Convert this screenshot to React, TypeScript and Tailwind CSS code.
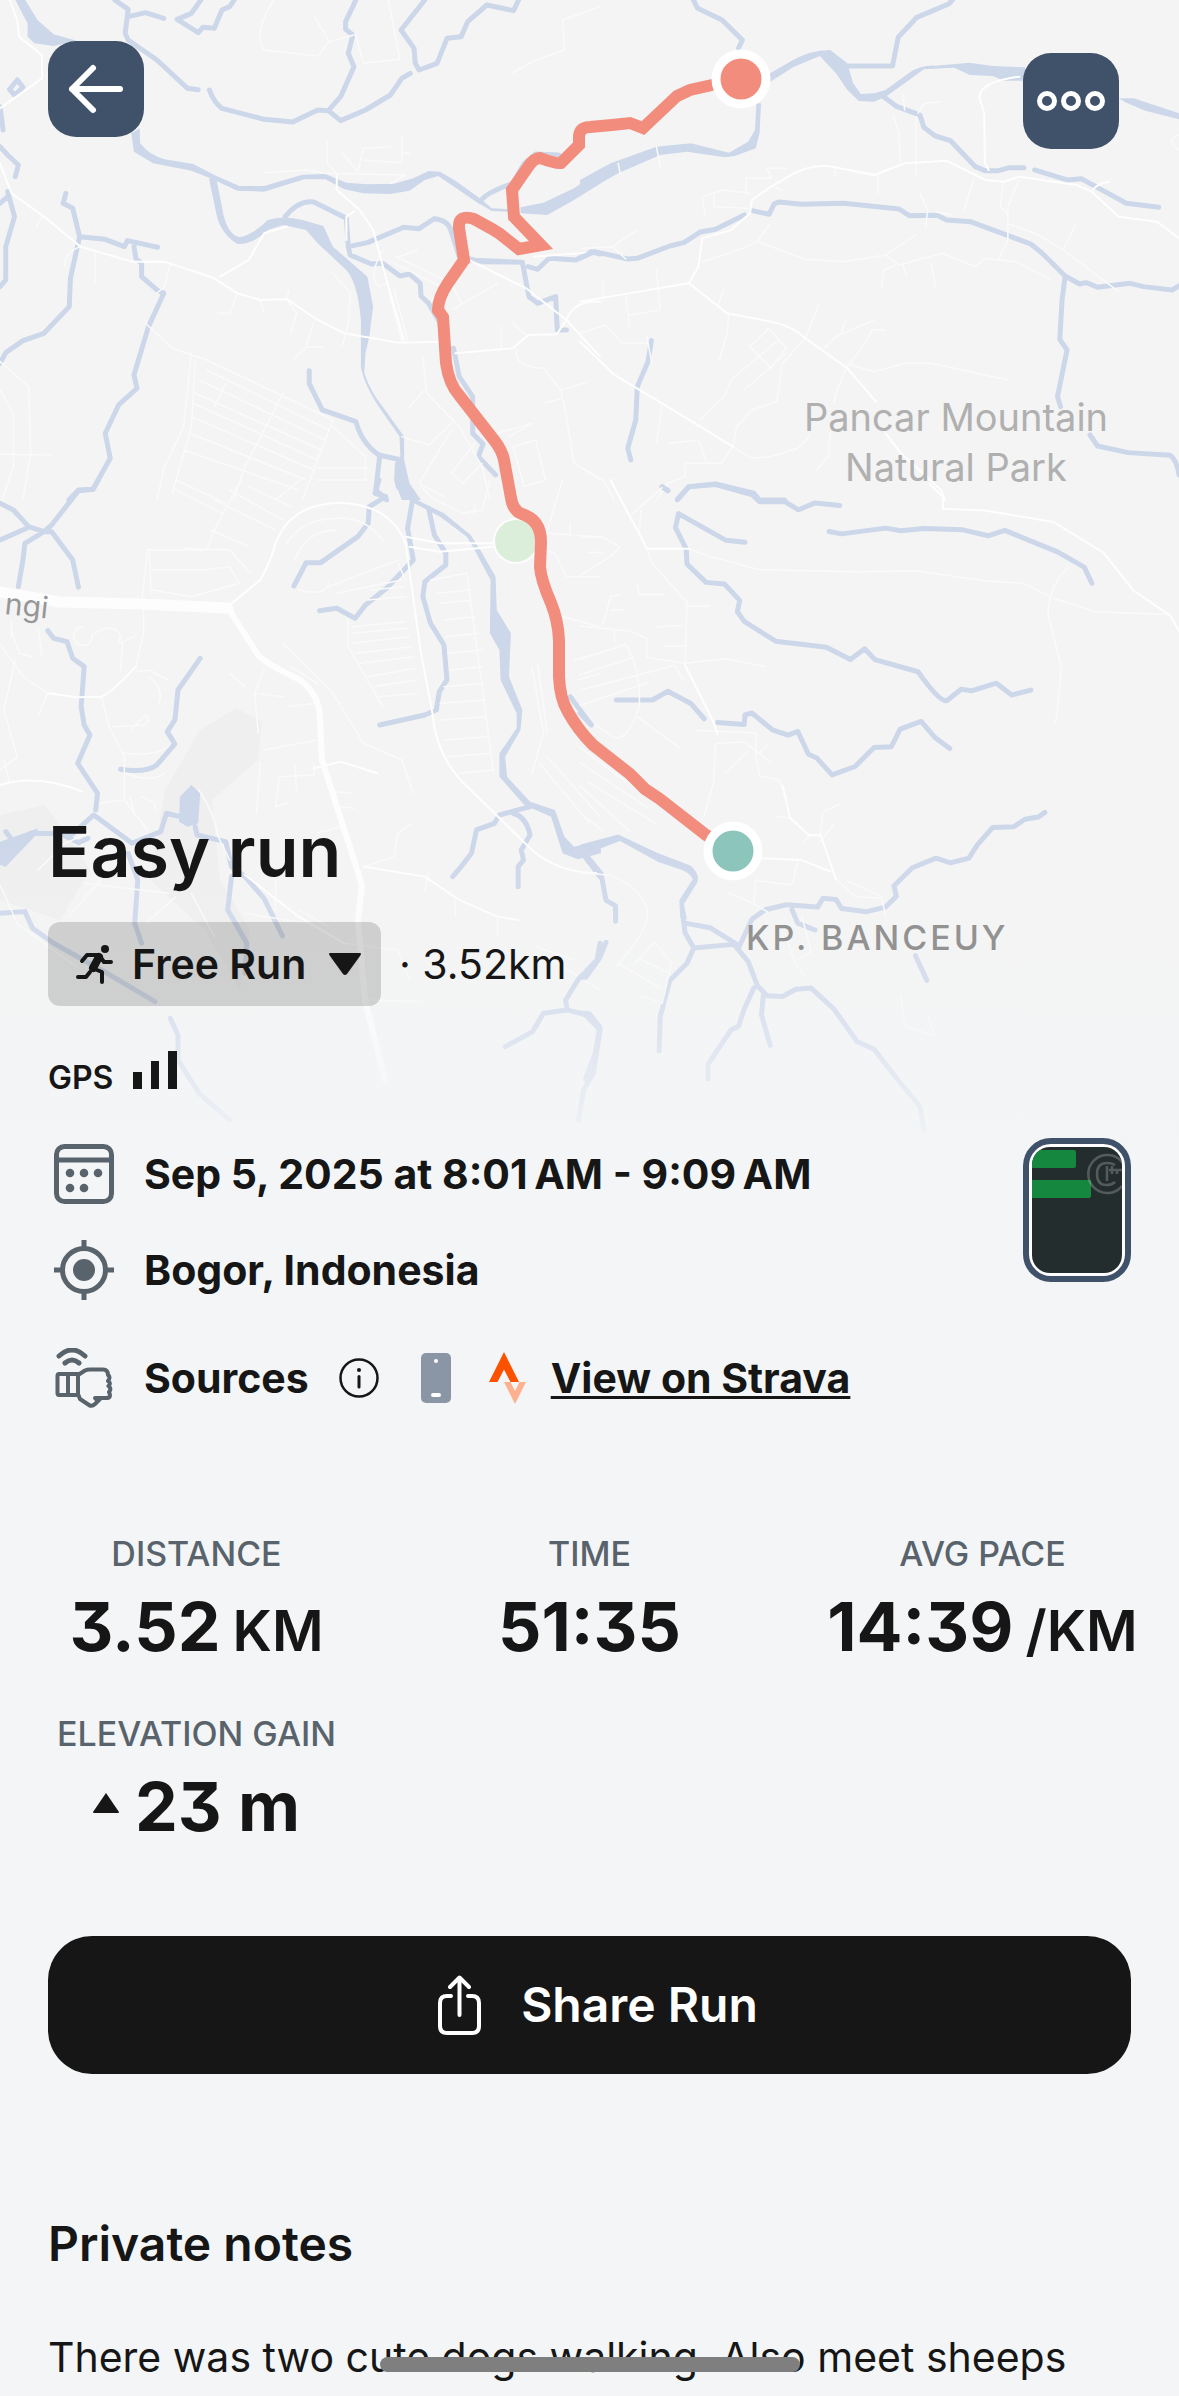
import React, { useState } from "react";

interface MapTile {
    transform: string;
    rivers: string[];
    streams: string[];
    roads: string[];
    lanes: string[];
}

// Each tile keeps its own grid and is placed on the map by its transform
const MAP_TILES: MapTile[] = [
    {
        transform: "scale(0.3827 0.3333)",
        rivers: [
            "M40 0L66 0L98 60L140 103L200 122L140 138L90 130L72 110L72 70Z",
            "M343 400L365 385L366 430Q390 465 430 478L505 492L560 525L625 558L690 558L790 524L850 522L905 548L960 553L1030 551L1080 535L1120 513L1150 515L1190 542L1250 592L1285 625L1340 628L1340 636L1285 633L1240 602L1180 555L1145 528L1110 540L1070 572L1020 582L950 580L900 568L850 538L795 538L690 575L620 572L550 535L500 512L400 490L350 455Z",
            "M1360 622L1420 608L1500 565L1570 510L1570 550L1500 600L1430 645L1360 640Z",
            "M546 535L566 540L580 620Q590 700 625 712Q660 705 700 660Q740 645 790 660L845 678L870 740L960 830L975 920L965 1010L955 1060L952 1120Q970 1180 1000 1220L1056 1310L1056 1380L1070 1450L1100 1500L1050 1500L1030 1440L1032 1390L1046 1370L1044 1310L990 1220Q950 1150 943 1100L943 960Q935 850 905 810L830 730L800 690L740 675L700 690Q660 735 620 732Q575 700 565 640Z",
        ],
        streams: [
            "M300 0L335 28L327 100L335 120L410 180L490 265L518 269",
            "M335 50L380 38L428 55",
            "M525 0L500 40L463 58L518 98L530 82L560 85L580 30L600 20L612 0",
            "M547 270Q560 310 580 325L690 358L765 366L830 330L858 332L890 362L955 330L1020 285L1050 235L1072 220",
            "M930 0L903 65L903 88L922 105L910 160L925 200L890 290L858 332",
            "M1110 0L1048 90L1082 145L1085 190L1095 210L1142 190L1168 115L1205 110L1222 65L1272 15L1342 32L1355 0",
            "M745 650Q780 600 820 606L905 655L910 740L960 728L1055 682L1095 686L1135 656Q1170 660 1178 690L1200 770L1260 785L1365 787",
            "M910 740L915 765L970 792L1000 790L1045 828L1070 822L1098 850L1100 888L1120 910L1150 970",
            "M1255 605Q1265 580 1340 550L1370 490L1400 462L1460 465",
            "M1225 780L1365 787L1382 890L1405 910L1452 890L1456 990L1480 990",
            "M1380 800L1405 808L1435 775L1505 780L1545 755L1568 762",
            "M172 580L165 610L190 625L208 710L275 718L325 740L333 722L412 742",
            "M350 740L355 775L370 790L370 830L410 870L428 880L388 980L350 1125L358 1165L310 1215L275 1300L288 1375L243 1468L205 1470L180 1500",
            "M208 710L184 835L181 920L115 1000L60 1022L15 1058L0 1090",
            "M0 440L20 465L48 495L40 530",
            "M20 575L38 650L15 740L15 840L0 860",
            "M20 590L0 610",
            "M45 240L60 262L38 285L25 268Z",
            "M0 320L8 390",
            "M808 1112L808 1150L842 1230L930 1265Q945 1330 990 1365L1040 1378",
            "M992 1370L982 1470L1010 1500",
            "M1185 1045L1200 1130L1235 1190L1235 1300L1262 1332L1250 1370L1295 1425",
        ],
        roads: [
            "M25 0L45 60L50 110L110 165L110 235L0 325",
            "M0 490L30 580L115 650L210 740L345 785L430 785L560 835L620 880L680 900L750 898L830 960L900 1000L1040 1028L1150 1025",
            "M880 525L880 570L940 630L975 690L1010 840L1055 1020",
            "M905 720L905 650L925 635",
            "M1225 780L1375 865L1480 960L1568 1070",
            "M1395 770L1568 755",
            "M1190 1060L1340 1045L1380 1005L1455 1003L1480 960Q1500 900 1568 905",
            "M575 830L650 780L690 700L750 680",
        ],
        lanes: [
            "M715 0Q660 100 690 150L830 168L860 125L820 45",
            "M860 125L925 105",
            "M690 518L800 510L850 520L1060 525L1020 550",
            "M855 425L855 490L880 520M895 460L935 515L950 445L1020 440M950 480L1050 488L1050 410M1050 460L1070 460",
            "M928 100L950 190L1045 178L1015 0",
            "M1568 20L1470 60L1475 150L1400 180L1340 218",
            "M110 650L95 680M210 740Q165 760 170 800M248 760L250 850M445 790L430 860L410 880",
            "M620 880L600 940L570 940M680 900L690 940M755 870L750 900L775 940L760 1000M820 965L800 1040L845 1042M800 1040L770 1075",
            "M870 820L915 880L910 970L895 1035",
            "M1035 770L1180 850L1205 910M1030 790L1170 870M1045 770L1090 750M1180 930L1300 850M1000 750Q960 830 990 860L1010 850",
            "M1015 870L1050 1025M1030 870L1065 1020",
            "M1350 1050Q1340 1100 1420 1105L1465 1170L1480 1250L1500 1390L1568 1440",
            "M1465 1170L1540 1145M1425 1210L1465 1195M1340 970L1380 1010M1310 980L1310 1040",
            "M380 970L450 1045L540 1080L870 1260L790 1500",
            "M500 1060L480 1280L430 1400L410 1500M510 1080L500 1280L450 1480",
            "M540 1110L860 1290M520 1140L850 1320M510 1180L840 1350M505 1210L830 1380M500 1250L820 1410M495 1300L800 1440M480 1350L780 1470",
            "M740 1180L640 1400L610 1500M590 1150L560 1220M870 1280L955 1370L955 1440M830 1405L960 1405M830 1440L960 1440",
            "M0 1170L35 1240L35 1400L5 1500M0 1085L75 1160L80 1360L60 1500M0 1362L135 1365",
            "M1105 1070L1115 1180L1200 1280L1260 1400L1280 1500M1070 1220L1110 1170M1050 1310L1120 1335L1180 1270",
            "M1180 1290L1095 1450L1160 1490M1240 1330L1180 1420L1210 1450L1260 1390M1330 1310L1390 1270L1300 1300M1340 1340L1400 1320L1425 1440L1370 1460Z",
        ],
    },
    {
        transform: "translate(580 0) scale(0.382 0.3333)",
        rivers: [
            "M0 540L80 490L200 440L290 430L390 458L440 425L458 390L462 310L474 310L470 400L460 445L405 468L380 472L280 455L210 465L100 520L0 585Z",
            "M490 225L550 185Q600 150 655 150L700 190L715 250L735 282L770 280L800 270L860 220Q890 195 930 197L1020 188L1080 198L1165 202L1165 242L1110 242L1080 228L1020 225L980 203L900 208L850 250L800 290L770 305L730 303L700 270L670 220L628 168L560 200L498 245Z",
            "M1410 295L1450 295L1568 340L1568 358L1480 332L1430 308Z",
        ],
        streams: [
            "M297 0L308 25L372 60L425 120L415 145",
            "M975 0L965 12L882 52L833 112L818 198L705 198",
            "M795 290L830 320L890 345L900 382L930 408L970 422L1035 500L1060 512L1095 512L1125 503L1162 503",
            "M1190 510L1275 540L1312 536L1430 610L1515 622",
            "M0 775L38 755L125 777L150 775L235 738L272 728L315 696L355 688L430 645",
            "M450 632L495 643L508 612L520 606L580 613L690 610L835 627L862 647L935 646L960 660L1022 665L1180 732L1210 760L1270 828L1308 852L1325 848L1355 862L1440 850L1475 860L1550 870L1568 858",
            "M1270 828L1262 900L1256 1018L1275 1050L1250 1190L1258 1220",
            "M1335 1305L1355 1338L1435 1358L1545 1366Q1562 1380 1568 1425",
            "M187 1022L178 1085L150 1160L146 1260L125 1345L133 1380",
            "M255 1500L285 1460L355 1452L455 1480L470 1500L535 1500",
            "M215 1460L230 1472",
        ],
        roads: [
            "M1150 230Q1050 245 1045 290L1058 340L1060 490L1070 510",
            "M500 560L560 520Q620 485 680 505L770 525L850 490L960 482L1060 540L1110 545L1150 530L1300 555L1340 575L1410 650L1510 665L1568 715",
            "M500 560L450 600L445 640L395 690L320 715L310 800L285 850",
            "M0 905L285 850L330 890L385 940L500 965Q560 980 590 1015L700 1105L775 1205",
            "M800 1300L840 1360L945 1470L955 1500",
            "M0 1025L90 1125L215 1210L400 1340",
            "M1340 575Q1350 550 1385 545",
        ],
        lanes: [
            "M820 345L835 400L838 490M880 350L880 530M845 280L850 330M885 340L900 310L945 305",
            "M320 785Q400 760 465 725L495 675M465 725L590 778L690 785L800 765L880 705M800 765L835 795L950 760L1035 800L1060 775L1140 785L1230 838",
            "M845 795L855 830M920 790L930 860M790 860L795 810L825 795M1095 780L1120 720L1120 620L1148 540M1120 670L1200 705L1265 750L1410 875M1265 750L1297 675",
            "M890 580L910 630L905 680M930 635L975 645M1030 540L1005 630M1108 545L1100 620L1120 640M780 520L780 580M668 505L668 530",
            "M320 590L375 570L445 580M320 590L328 650M350 585L350 620L440 625M435 580L435 535L500 535L490 505L540 505M500 560L530 570",
            "M0 745L85 740L150 690M85 740L120 777M100 490L105 520M200 440L210 500",
            "M0 1000L65 975L110 1028L175 1030M175 1010L188 1090M120 890L130 980M200 810L210 930L130 945M60 840L60 890",
            "M590 1015L625 915M590 1015L530 1090L515 1205L450 1230L410 1280L400 1340L450 1375L500 1370L570 1345L600 1310",
            "M495 985L540 1045L500 1105L445 1040ZM520 1020L395 1140L380 1185L315 1260M540 1060L430 1170",
            "M640 1045L670 1010L770 960M695 965L680 1010M700 1100L740 1040L765 990L800 990M710 1095L770 1115L850 1090L920 1090L1120 1140",
            "M695 1110L670 1180L665 1210M655 1300L650 1370L620 1410M375 870L360 920M390 940L385 1000L365 1080",
            "M215 1210L200 1330M235 1330L310 1320L330 1380M275 1390L370 1390L400 1340M275 1390L275 1430L230 1450L200 1500M0 1400L60 1440L90 1500",
            "M1568 405Q1530 420 1568 450",
        ],
    },
    {
        transform: "translate(0 480) scale(0.3827 0.3333)",
        rivers: [
            "M1030 0L1065 0L1090 60L1160 100L1230 165L1260 220L1295 290L1298 390L1335 460L1330 590L1365 690L1360 750L1320 830L1325 890L1385 965L1450 990L1475 1070L1500 1100L1570 1080L1570 1120L1510 1138L1470 1120L1440 1010L1370 975L1305 890L1305 820L1350 745L1350 700L1308 600L1305 510L1280 460L1282 300L1240 210L1220 170L1150 110L1075 65L1035 25Z",
            "M470 950L500 915L523 940L518 1030L490 1040L468 1025Z",
            "M0 1085L50 1065L100 1045L90 1070L40 1130L15 1160L0 1155Z",
        ],
        streams: [
            "M257 0L243 28L205 32L135 135L115 155L65 190L60 240L48 320",
            "M0 70L35 90L75 140L115 155L135 155L190 240L205 322",
            "M0 180L70 145",
            "M125 452L140 475L175 485L190 535L220 560L212 680L220 735L235 765L203 850L255 940L250 990",
            "M523 535L465 630L457 720L437 755L457 792L410 855Q380 880 315 868",
            "M990 0L980 40L1008 50L965 80L962 130L935 170L838 248L800 248L768 318",
            "M1078 60L1065 145L1080 240L1010 325L955 375L928 415L880 385L835 392",
            "M1120 85L1135 165L1165 220L1165 255L1110 305L1105 350L1125 430L1160 495L1168 600L1148 635L1140 690L1110 705L992 735",
            "M1490 650L1545 735",
            "M1385 980L1305 1005L1292 1030L1245 1050L1232 1120L1205 1160L1183 1190",
            "M1340 1000Q1375 1010 1385 1065L1362 1110L1368 1140L1354 1160L1354 1220",
            "M15 1055L35 1085M80 1060L190 1062L245 1005L345 1090L420 1055L435 1000L470 1010",
            "M170 1068L205 1088L230 1075",
            "M510 1040L515 1065L590 1085L605 1160L640 1190L690 1255L738 1368",
            "M335 1120L360 1200L352 1330L370 1390",
            "M605 1190L595 1290L645 1390L640 1480",
            "M0 1300L65 1295L85 1345L140 1390L280 1480L405 1565",
            "M445 1615L465 1665L465 1740L520 1840L600 1920",
            "M1525 1125L1568 1190",
            "M1568 1390L1560 1440L1510 1500L1478 1560L1482 1590L1420 1600L1392 1655L1320 1700",
            "M1482 1590L1530 1605L1568 1650L1550 1780L1525 1830L1512 1920",
        ],
        roads: [
            "M600 375L680 300Q710 240 720 190Q760 70 890 68Q1020 75 1060 190L1100 520L1130 700Q1140 840 1230 930L1390 1110Q1460 1180 1568 1180",
            "M1060 170L1150 190L1290 190M1070 200L1150 215L1290 200",
            "M640 1185L780 1310L900 1390",
            "M820 865L890 845L985 880",
            "M950 1160L1110 1190L1200 1260L1300 1310L1355 1320",
            "M125 640L200 652L265 650Q290 640 355 560",
            "M0 915Q100 880 215 935",
        ],
        lanes: [
            "M265 650L285 740L325 830L325 960L385 1050M355 560L375 460L375 370M355 575L390 570L440 600M390 590Q430 630 415 670",
            "M0 490L60 590L125 640L100 705M40 540L10 690L45 830L0 870M10 840L25 910",
            "M215 440Q180 450 200 490Q240 510 240 465Q300 420 315 470L310 490L350 470M320 490L315 570",
            "M370 370L385 210L540 210L560 150L630 0M390 220L395 340M400 270L530 270L600 260L625 310L500 350L400 330M480 205L600 210L655 280",
            "M460 0L590 70M460 30L580 100M560 60L720 150M600 30L740 120M650 20L760 80M720 60L785 0M550 150L650 200",
            "M750 190Q790 110 900 115Q960 120 1000 180M770 240Q800 150 880 150M780 330Q850 350 860 310M860 320L1040 240M880 340L1050 300",
            "M910 420L910 500L1000 680M920 440L1060 425M920 460L1065 445M920 490L1070 470M930 520L1075 500M940 550L1080 530M960 590L1085 565M975 620L1090 600M990 650L1090 640",
            "M1125 300L1220 280L1290 880M1140 340L1230 330M1150 370L1235 360M1160 420L1240 410M1165 470L1250 460M1170 520L1260 510M1175 570L1262 560M1160 620L1265 610M1150 670L1270 660M1150 720L1270 710M1160 780L1275 770M1170 830L1280 820M1200 880L1285 870",
            "M960 360L1060 350M970 330L1055 320M1040 250L1060 300",
            "M740 490L870 640L950 790L1050 840L1080 940M760 560L830 610M690 810L830 780M750 680L825 670",
            "M720 980L730 890L820 885L820 850M770 850L775 930M720 980L750 970M870 935L920 940M890 980L925 985M830 1060L890 1040",
            "M670 1000L680 850M690 570L665 640L675 760M665 640L740 650M600 580L640 620",
            "M340 750L380 705Q400 720 375 735L295 740M325 820Q400 830 440 800",
            "M260 970L320 960M340 950L350 1000L380 1040M370 950L405 970L405 990M430 880Q390 910 330 880",
            "M1075 1030L1040 1060L1030 1130L950 1160M1120 1180L1110 1230M1190 1260L1190 1310M1300 1310L1300 1370",
            "M1390 880L1420 760L1390 560M1405 550L1430 760M1500 540L1568 520M1510 600L1568 580M1430 830L1568 1010M1410 850L1540 1030",
            "M1430 160L1568 170M1420 210L1450 220L1480 290L1568 290M1470 0L1430 150M1490 130L1490 170M1470 410L1568 440",
            "M0 1215L45 1330L150 1420L200 1460M220 1210L440 1240M270 1190L180 1310M460 1250L380 1330M500 1240L560 1370",
            "M520 930Q560 1000 570 1070L600 1140M100 1170L170 1090L230 1060",
            "M30 450L50 520L85 530M100 450L110 530M30 420L30 470",
            "M900 1390L1040 1410L1070 1500M960 1560L1100 1565M1440 1440L1568 1530M1400 1400L1500 1440",
            "M1100 20L1130 55L1210 100L1260 90L1280 0M1240 70L1240 100",
            "M640 1300L800 1330M720 1290L720 1200M780 1290L860 1340",
        ],
    },
    {
        transform: "translate(580 480) scale(0.382)",
        rivers: [
            "M0 955L100 928L200 975L290 1010Q322 1040 300 1065L272 1110L280 1150L262 1145L260 1100L295 1045Q290 1028 260 1018L205 1000L105 945L0 985Z",
        ],
        streams: [
            "M215 18L230 28",
            "M255 50L285 18L355 12L450 38L470 57L535 56L572 78L615 60L680 67",
            "M432 163L382 158L258 88L250 125L278 180L280 220L330 268L378 272L418 315L412 345L430 370L512 422L645 438L708 470L745 442L772 470L885 502Q940 580 960 578L998 548L1025 552L1090 532L1130 563L1180 550",
            "M652 135L685 141L800 126L840 133L900 127L1000 130L1068 146L1112 132L1250 188L1320 228L1340 270",
            "M95 576L190 576L230 553L290 585L325 625",
            "M360 635L430 640L432 615L450 610L505 655L545 668L570 658L598 718L620 728L660 772L720 750L770 700L815 698L838 652L893 632L930 675L968 703",
            "M1217 870L1200 882L1165 888L1135 908L1080 910L1040 955L1018 990L970 1002L932 990L870 1015L822 1062L828 1090L800 1118L750 1130L685 1122L670 1098L636 1095L622 1118L540 1112L485 1125L450 1150L415 1225",
            "M555 1125L570 1160L615 1178",
            "M270 1145L275 1185L298 1225L410 1215L340 1172L275 1160",
            "M400 1212L440 1260L465 1325L490 1350L530 1352L565 1333L605 1330L665 1385L725 1470L770 1490L830 1568",
            "M298 1225L280 1265L235 1310L210 1405L207 1495",
            "M455 1330L430 1385L415 1430L395 1440L335 1530L335 1568",
            "M480 1350L475 1400L498 1480",
            "M10 975L55 1030L68 1100L93 1115L93 1155",
            "M68 1210L52 1250L15 1302L0 1302",
            "M0 1395L25 1398L52 1432L40 1500L15 1568",
            "M830 1568L890 1640L900 1700",
            "M878 1245L908 1310",
            "M0 610L28 640",
        ],
        roads: [
            "M915 10L950 45L950 75L1060 80L1240 110L1370 190L1450 290L1545 355L1568 395",
            "M80 0L130 95L155 140L175 180L285 180",
            "M275 485L350 635L360 665",
            "M475 990L580 995L655 1025",
            "M530 800L550 885L600 930L630 930L670 1045",
        ],
        lanes: [
            "M285 180L340 200L470 235L720 240L880 238L1070 265L1160 270L1240 310L1350 345L1540 352",
            "M1280 228Q1230 270 1225 350L1260 490L1250 600L1245 635",
            "M175 180L190 220L280 320L275 485M275 330L340 330M200 385L270 380M225 435L275 435M150 270L155 300L220 300",
            "M275 480L380 468L485 488M0 382L130 395L175 415L175 465L280 480M90 395L90 425M60 380L80 305L105 300M80 340L115 340",
            "M0 150L60 150L105 175L80 200L0 250M130 95L215 20M160 80L155 140M20 190L60 190",
            "M0 470L120 430Q160 500 155 590Q130 680 90 675L40 640M0 510L140 465M0 550L250 485L270 525M0 590L180 530M150 620L260 700",
            "M305 655L460 662L460 720L470 775L520 785L540 830M355 690L430 685L500 740M440 710L380 768M355 690L350 790L325 880M495 690L470 715",
            "M515 880L550 885M630 930L635 870L680 848M665 900L630 945M585 950L600 930",
            "M388 1080L460 1112L490 1130M455 1110L460 1048L555 1060L570 1000",
            "M0 1028L80 1035Q170 1070 178 1140Q170 1190 90 1280M100 1265L210 1330M140 1270L195 1210L240 1265L215 1370M150 1250L230 1290M160 1350L215 1370",
            "M670 1045L720 1090L790 1095L800 1140M700 1050L790 1090M545 1210L560 1260L605 1235L580 1140M560 1260L590 1300",
            "M0 700L120 790M0 740L180 860M20 790L200 900M0 800L130 920M0 870L60 920M130 790L320 905",
            "M840 1350L850 1430L930 1455L910 1400",
        ],
    },
];

const ROUTE =
    "M740 79L712 85L690 90L677 96L660 112L643 128L630 123L612 125L590 127Q580 127 579 136L579 145L561 163Q556 164 540 158Q534 158 528 167L512 190L514 217L541 245L519 249L500 234L492 229L474 219Q458 214 459 228L464 260L448 283Q438 298 438 310L443 317L446 363Q449 384 459 395L494 440Q502 450 504 460L511 498Q513 511 522 514Q541 520 541 542L540 567Q541 580 551 603Q558 620 559 640L559 677Q560 699 568 712Q578 730 593 745L630 774L645 789L660 799L706 835L733 851";

const RunMap: React.FC = () => (
    <svg
        viewBox="0 0 1179 1200"
        className="absolute inset-x-0 top-0 h-auto w-full"
        fill="none"
        strokeLinecap="round"
        strokeLinejoin="round"
        aria-label="Run route map"
    >
        <defs>
            <linearGradient id="mapFade" x1="0" y1="0" x2="0" y2="1">
                <stop offset="0" stopColor="#f3f5f7" stopOpacity="0" />
                <stop offset="0.4" stopColor="#f3f5f7" stopOpacity="0.25" />
                <stop offset="0.9" stopColor="#f3f5f7" />
            </linearGradient>
        </defs>
        <rect width="1179" height="1200" fill="#f4f4f4" />

        {/* Built-up areas */}
        <path
            d="M236 708L262 722L258 760L212 800L220 880L250 930L240 990L205 930L150 880L165 790L200 730Z"
            fill="#efefef"
        />
        <path d="M0 815L45 805L70 840L90 870L60 920L0 900Z" fill="#efefef" />

        {MAP_TILES.map((tile) => (
            <g key={tile.transform} transform={tile.transform}>
                <path d={tile.rivers.join("")} fill="#cdd7ea" />
                <path
                    d={tile.streams.join("")}
                    stroke="#cdd7ea"
                    strokeWidth="5"
                    vectorEffect="non-scaling-stroke"
                />
                <path
                    d={tile.lanes.join("")}
                    stroke="#fafafa"
                    strokeWidth="1.5"
                    vectorEffect="non-scaling-stroke"
                />
                <path
                    d={tile.roads.join("")}
                    stroke="#fefefe"
                    strokeWidth="2"
                    vectorEffect="non-scaling-stroke"
                />
            </g>
        ))}

        {/* Main road */}
        <path d="M0 592L60 602L140 604L228 608" stroke="#fdfdfd" strokeWidth="11" />
        <path
            d="M228 608L258 655Q265 663 300 680Q320 695 320 720L322 760L362 885L358 920L365 1000L385 1080"
            stroke="#fdfdfd"
            strokeWidth="6"
        />

        <circle cx="516" cy="541" r="22" fill="#dbeeda" stroke="#fdfdfd" strokeWidth="2" />

        <rect y="840" width="1179" height="360" fill="url(#mapFade)" />

        <g fontFamily="Inter, sans-serif">
            <g fontSize="38" fill="#b0b0b0" textAnchor="middle">
                <text x="956" y="431">Pancar Mountain</text>
                <text x="956" y="481">Natural Park</text>
            </g>
            <text x="746" y="950" fontSize="34" fontWeight="500" letterSpacing="3" fill="#929292">
                KP. BANCEUY
            </text>
            <text x="4" y="614" fontSize="30" fill="#969696" transform="rotate(6 4 614)">
                ngi
            </text>
        </g>

        <path d={ROUTE} stroke="#f28d7e" strokeWidth="12" strokeLinejoin="miter" />
        <circle cx="741" cy="79" r="25" fill="#f28d7e" stroke="#fff" strokeWidth="9" />
        <circle cx="733" cy="851" r="25" fill="#8bc5bb" stroke="#fff" strokeWidth="9" />
    </svg>
);

const BackIcon = () => (
    <svg viewBox="0 0 96 96" className="size-24" fill="none" stroke="#fff" strokeWidth="6" strokeLinecap="round" strokeLinejoin="round">
        <path d="M72 48H24M45 27L24 48L45 69" />
    </svg>
);

const MoreIcon = () => (
    <svg viewBox="0 0 96 96" className="size-24" fill="none" stroke="#fff" strokeWidth="5">
        <circle cx="24" cy="48" r="7.500" />
        <circle cx="48" cy="48" r="7.500" />
        <circle cx="72" cy="48" r="7.500" />
    </svg>
);

const RunnerIcon = () => (
    <svg viewBox="0 0 38 42" className="h-[42px] w-[38px]" fill="none" stroke="#161616" strokeWidth="4" strokeLinecap="round" strokeLinejoin="round">
        <circle cx="29" cy="6" r="4" fill="#161616" stroke="none" />
        <path d="M23 14L17 25" strokeWidth="8" />
        <path d="M6 18L11 12H23L28 19H35" />
        <path d="M16 25L26 29V39M14 29L10 34H2" />
    </svg>
);

const CalendarIcon = () => (
    <svg viewBox="0 0 60 60" className="size-[60px] shrink-0" fill="none" stroke="#59636c" strokeWidth="5">
        <rect x="2.5" y="2.5" width="55" height="55" rx="8" />
        <path d="M2.5 16H57.5" />
        <g fill="#59636c" stroke="none">
            <circle cx="16" cy="29" r="4.3" />
            <circle cx="30" cy="29" r="4.3" />
            <circle cx="44" cy="29" r="4.3" />
            <circle cx="16" cy="44" r="4.3" />
            <circle cx="30" cy="44" r="4.3" />
        </g>
    </svg>
);

const LocationIcon = () => (
    <svg viewBox="0 0 60 60" className="size-[60px] shrink-0" fill="none" stroke="#59636c" strokeWidth="5">
        <circle cx="30" cy="30" r="21.5" />
        <path d="M30 0V8M30 52V60M0 30H8M52 30H60" />
        <circle cx="30" cy="30" r="11" fill="#59636c" stroke="none" />
    </svg>
);

const WearableIcon = () => (
    <svg viewBox="0 0 60 60" className="size-[60px] shrink-0" fill="none" stroke="#59636c" strokeWidth="4" strokeLinecap="round" strokeLinejoin="round">
        <path d="M5 8Q18 -4 31 8M11 15Q18 9 25 15" strokeWidth="5" />
        <path d="M24 26H5Q3.500 26 3.500 28V45Q3.500 47 5 47H23M14 27V46" />
        <path d="M24 27L31 22.500Q33 21.500 36 21.500H49Q54 21.500 54 27Q57 29 54 33Q57.500 35 54.500 38Q58 41 55 44Q58 50 52 50H41L42 51M24 27V46L26 51L35 57Q38 59 41 56L47 50" />
    </svg>
);

const InfoIcon = () => (
    <svg viewBox="0 0 40 40" className="size-10" fill="none" stroke="#161616" strokeWidth="3" strokeLinecap="round">
        <circle cx="20" cy="20" r="18.500" strokeWidth="2.500" />
        <path d="M20 18.500V29" />
        <circle cx="20" cy="12" r="2" fill="#161616" stroke="none" />
    </svg>
);

const PhoneIcon = () => (
    <svg viewBox="0 0 30 50" className="h-[50px] w-[30px]">
        <rect width="30" height="50" rx="5" fill="#8a95a6" />
        <circle cx="15" cy="8" r="2" fill="#fff" />
        <rect x="10" y="40" width="10" height="4" rx="2" fill="#fff" />
    </svg>
);

const StravaIcon = () => (
    <svg viewBox="0 0 38 52" className="h-[52px] w-[38px]">
        <path d="M15 0L30 30H21.500L15 17.500L8.500 30H0Z" fill="#fc5200" />
        <path d="M15 30H21.500L26 39L30.500 30H37L26 52Z" fill="#ffb091" />
    </svg>
);

const ShareIcon = () => (
    <svg viewBox="0 0 54 60" className="h-[60px] w-[54px]" fill="none" stroke="#fff" strokeWidth="4" strokeLinecap="round" strokeLinejoin="round">
        <path d="M18 21H14Q7 21 7 28V51Q7 58 14 58H39Q46 58 46 51V28Q46 21 39 21H35" />
        <path d="M26.500 40V3M17 12L26.500 2.500L36 12" />
    </svg>
);

const Thumbnail: React.FC = () => (
    <button
        aria-label="Open photo"
        className="h-36 w-[108px] shrink-0 rounded-[28px] border-[6px] border-[#40526a] bg-white p-[3px]"
    >
        <svg viewBox="0 0 90 126" className="size-full rounded-[18px] bg-[#242d2e]" preserveAspectRatio="none">
            <path d="M0 3H42Q44 3 44 5V19Q44 21 42 21H0Z" fill="#15873f" />
            <path d="M0 33H57Q59 33 59 35V49Q59 51 57 51H0Z" fill="#15873f" />
            <g fill="none" stroke="#fff" strokeOpacity="0.22" strokeWidth="2.500">
                <path d="M90 15A19 19 0 1 0 90 39" />
                <path d="M83 18Q80 16 75 16Q65 16 65 27Q65 38 74 38Q80 38 83 35" />
                <path d="M75 19V34M80 19V27M85 22V27M77 23H90" />
            </g>
        </svg>
    </button>
);

interface StatProps {
    label: string;
    value: string;
    unit?: string;
    gain?: boolean;
}

const Stat: React.FC<StatProps> = ({ label, value, unit, gain }) => (
    <div className="flex flex-col items-center gap-[10px] whitespace-nowrap">
        <dt className="text-[34px] leading-[44px] font-medium text-[#59636c]">{label}</dt>
        <dd className="flex items-baseline gap-3 text-[68px] leading-[80px] font-bold [font-feature-settings:'cv09']">
            {gain && (
                <svg viewBox="0 0 26 20" className="mr-1 h-14 w-[26px]">
                    <path d="M13 0L26 19Q26 20 25 20H1Q0 20 0 19Z" fill="#161616" />
                </svg>
            )}
            {value}
            {unit && <span className="text-[56px] leading-none font-semibold">{unit}</span>}
        </dd>
    </div>
);

const STATS: StatProps[] = [
    { label: "DISTANCE", value: "3.52", unit: "KM" },
    { label: "TIME", value: "51:35" },
    { label: "AVG PACE", value: "14:39", unit: "/KM" },
    { label: "ELEVATION GAIN", value: "23 m", gain: true },
];

const App: React.FC = () => {
    const [runType, setRunType] = useState("Free Run");

    return (
        <div className="relative min-h-screen overflow-hidden bg-[#f3f5f7] font-['Inter',sans-serif] text-[#161616]">
            <RunMap />

            <div className="relative pb-2">
                <header className="flex items-start justify-between pt-[41px] pr-[60px] pl-12">
                    <button aria-label="Back" className="rounded-[28px] bg-[#40526a]">
                        <BackIcon />
                    </button>
                    <button aria-label="More options" className="mt-3 rounded-[28px] bg-[#40526a]">
                        <MoreIcon />
                    </button>
                </header>

                <main>
                    <section className="px-12 pt-[663px]">
                        <h1 className="text-[70px] leading-[80px] font-semibold">Easy run</h1>
                        <div className="mt-[30px] flex items-center gap-[18px] text-[41px] leading-[60px]">
                            <label className="flex h-[84px] items-center rounded-xl bg-black/15 pr-5 pl-7 font-semibold">
                                <RunnerIcon />
                                <select
                                    aria-label="Run type"
                                    value={runType}
                                    onChange={(event) => setRunType(event.target.value)}
                                    className="ml-[18px] appearance-none bg-transparent"
                                >
                                    <option>Free Run</option>
                                </select>
                                <svg viewBox="0 0 32 22" className="ml-[22px] h-[22px] w-8">
                                    <path d="M1 0H31Q33 0 31 3L18 21Q16 23 14 21L1 3Q-1 0 1 0Z" fill="#161616" />
                                </svg>
                            </label>
                            <span>· 3.52km</span>
                        </div>
                        <div className="mt-[45px] flex items-baseline gap-5 text-[32px] leading-10 font-semibold">
                            GPS
                            <svg viewBox="0 0 44 38" className="h-[38px] w-11" fill="#161616">
                                <path d="M0 21H9V38H0ZM18 10H26V38H18ZM35 0H44V38H35Z" />
                            </svg>
                        </div>
                    </section>

                    <section className="mt-10 px-12 text-[41px] leading-[60px] font-bold">
                        <div className="flex items-start justify-between">
                            <div className="flex flex-col gap-9 pt-[6px] pl-[6px]">
                                <div className="flex items-center gap-[30px]">
                                    <CalendarIcon />
                                    <span>Sep 5, 2025 at 8:01{"\u202f"}AM - 9:09{"\u202f"}AM</span>
                                </div>
                                <div className="flex items-center gap-[30px]">
                                    <LocationIcon />
                                    <span>Bogor, Indonesia</span>
                                </div>
                            </div>
                            <Thumbnail />
                        </div>
                        <div className="mt-12 flex items-center pl-[6px]">
                            <WearableIcon />
                            <span className="ml-[30px]">Sources</span>
                            <button aria-label="About sources" className="ml-[30px]">
                                <InfoIcon />
                            </button>
                            <span className="ml-[42px]">
                                <PhoneIcon />
                            </span>
                            <a href="#strava" className="ml-[38px] flex items-center gap-6">
                                <StravaIcon />
                                <span className="underline decoration-[3px] underline-offset-[3px]">View on Strava</span>
                            </a>
                        </div>
                    </section>

                    <dl className="mt-[124px] grid grid-cols-3 gap-y-[46px]">
                        {STATS.map((stat) => (
                            <Stat key={stat.label} {...stat} />
                        ))}
                    </dl>

                    <section className="mt-[90px] px-12">
                        <button className="flex h-[138px] w-full items-center justify-center gap-[34px] rounded-[44px] bg-[#161616] pl-3 text-[48px] font-semibold text-white">
                            <ShareIcon />
                            Share Run
                        </button>

                        <h2 className="mt-[142px] text-[48px] leading-[56px] font-semibold">Private notes</h2>
                        <p className="mt-[55px] text-[41px] leading-[60px]">
                            There was two cute dogs walking. Also meet sheeps
                        </p>
                    </section>
                </main>
            </div>

            <div className="fixed inset-x-0 bottom-6 mx-auto h-[15px] w-[420px] rounded-full bg-[#7f7f7f]" />
        </div>
    );
};

export default App;
